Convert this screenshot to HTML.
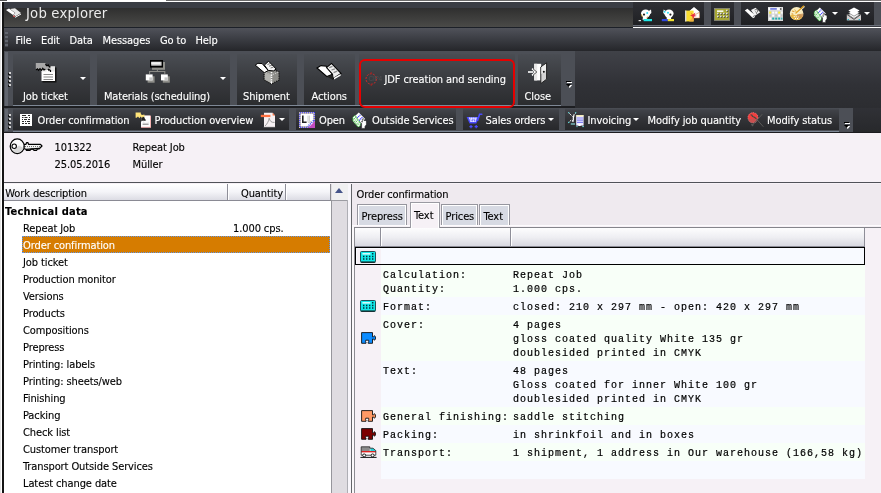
<!DOCTYPE html>
<html lang="en">
<head>
<meta charset="utf-8">
<title>Job explorer</title>
<style>
html,body{margin:0;padding:0;}
body{width:881px;height:493px;overflow:hidden;position:relative;background:#f6f1f6;
 font-family:"DejaVu Sans Condensed","DejaVu Sans","Liberation Sans",sans-serif;font-stretch:condensed;font-size:11px;letter-spacing:-0.1px;color:#000;}
.a{position:absolute;}
.t{position:absolute;white-space:nowrap;line-height:13px;height:13px;-webkit-text-stroke:.12px;}
.w{color:#fff;}
.btn{position:absolute;top:54px;height:50.6px;background:linear-gradient(#4a4d53,#3a3c40 45%,#2b2c2f);}
.g2{position:absolute;top:107.7px;height:22.8px;background:linear-gradient(#4c4f56 0,#404248 10%,#333438 48%,#27282b);}
.grip{position:absolute;width:3px;}
.grip i{display:block;width:2px;height:2px;background:#d4d4d4;margin:0 0 2px 0;box-shadow:-1px 1px 0 #151515;}
.arr{position:absolute;width:0;height:0;border-left:3px solid transparent;border-right:3px solid transparent;border-top:3px solid #fff;}
.row{position:absolute;left:23px;white-space:nowrap;line-height:13px;height:13px;-webkit-text-stroke:.12px;}
.mono{font-family:"Liberation Mono","DejaVu Sans Mono",monospace;font-size:10px;letter-spacing:1px;-webkit-text-stroke:.2px #000;line-height:14px;white-space:pre;color:#000;}
.tr{position:absolute;left:381px;width:484px;}
.tr .k{position:absolute;left:2px;top:4px;}
.tr .v{position:absolute;left:132px;top:4px;}
.tab{position:absolute;box-sizing:border-box;border:1px solid #96969e;border-bottom:none;background:#d7dae3;box-shadow:inset 1px 1px 0 #fff,inset -1px 0 0 #fff;}
</style>
</head>
<body>
<div id="app" style="position:absolute;left:0;top:0;width:881px;height:493px;will-change:transform">

<svg width="0" height="0" style="position:absolute"><defs>
 <g id="calc">
  <rect x="0.5" y="0.5" width="15" height="11" rx="1" fill="#10e8e8" stroke="#205058" stroke-width="1"/>
  <path d="M1 11 H15" stroke="#111" stroke-width="1"/>
  <rect x="2.4" y="2.2" width="8" height="1.3" fill="#fff"/>
  <path d="M12 2.8 h1.4 M3 5.4 h1.4 M6 5.4 h1.4 M9 5.4 h1.4 M12 5.4 h1.4 M3 8 h1.4 M6 8 h1.4 M9 8 h1.4 M12 8 h1.4" stroke="#003038" stroke-width="1.5"/>
 </g>
 <path id="pz" d="M0.6 0.6 H11.5 V4.9 H12.6 L13.4 3.6 Q14.7 4.6 14.5 6 Q14.7 7.4 13.4 8.3 L12.6 7 H11.5 V11.3 H7.2 V10 Q8.4 9.4 7.6 8.2 H4.8 Q3.8 9.4 5 10 V11.3 H0.6 Z" stroke="#111" stroke-width=".9"/>
</defs></svg>
<!-- top strip -->
<div class="a" style="left:0;top:0;width:881px;height:2px;background:#fff"></div>
<div class="a" style="left:166px;top:0;width:715px;height:1px;background:#6a6a6a"></div>
<div class="a" style="left:0;top:0;width:7px;height:1px;background:#555"></div>
<!-- left frame -->
<div class="a" style="left:0;top:2px;width:2px;height:491px;background:linear-gradient(90deg,#e2e2e2,#e8e8e8 1.5px,#fff 1.5px)"></div>
<div class="a" style="left:2px;top:2px;width:1.6px;height:491px;background:#141414"></div>

<!-- title bar -->
<div class="a" id="title" style="left:4px;top:2px;width:877px;height:26px;background:linear-gradient(#3a3d44 0,#3a3d44 6px,#2f2f2f 6px,#4a4a48 25px,#1c2028 25px,#1c2028 26px)"></div>
<svg class="a" style="left:5px;top:8px" width="17" height="11" viewBox="0 0 17 11">
 <path d="M1 2 L4 0.5 L10 5 L8 7 Z" fill="#fff"/>
 <path d="M5 1 L10 0.3 L16 5 L10.5 8.2 L8.5 6.8 L10.3 5 Z" fill="#e8e8e8"/>
 <path d="M8 7.5 L10.5 9.2 L16 6" stroke="#fff" stroke-width="1" fill="none"/>
 <rect x="8.2" y="7.6" width="1.6" height="1.4" fill="#c03030"/>
</svg>
<div class="t w" style="left:26px;top:4px;font-size:14.7px;letter-spacing:.2px;line-height:18px;height:18px;color:#ececec;-webkit-text-stroke:0">Job explorer</div>

<!-- title toolbar -->
<div class="a" style="left:633px;top:2px;width:248px;height:23px;background:#4c4f56"></div>
<div class="a" style="left:633px;top:2px;width:241px;height:23px;background:linear-gradient(#2f3035,#1f2023)"></div>
<div class="a" style="left:704px;top:2px;width:7px;height:23px;background:#4c4f56"></div>
<div class="a" style="left:734px;top:2px;width:7px;height:23px;background:#4c4f56"></div>
<div class="a" style="left:633px;top:25px;width:248px;height:3px;background:linear-gradient(#6a6f7a 0,#6a6f7a 1px,#3a3c42 1px,#3a3c42 2px,#fff 2px)"></div>
<!-- title toolbar icons -->
<svg class="a" style="left:638px;top:8px" width="16" height="15" viewBox="0 0 16 15">
 <ellipse cx="7.6" cy="5.6" rx="4.6" ry="4.2" fill="#fff"/>
 <path d="M10 3.4 L13 1.6 L13.4 5 L11 7Z" fill="#fff"/>
 <path d="M5 8 L9.6 8.4 L9 11 L4.6 12Z" fill="#fff"/>
 <circle cx="9.2" cy="5" r="1" fill="#30d8f0"/>
 <circle cx="6" cy="6.6" r="1.1" fill="#222"/>
 <path d="M3.4 6.4 L4.4 9 M9.6 8.6 L8.8 10.4" stroke="#c8a030" stroke-width=".9"/>
 <rect x="5.6" y="11" width="8.4" height="2.2" fill="#20e8e8"/>
 <rect x="0.6" y="12" width="2.4" height="1.2" fill="#ddd"/>
</svg>
<svg class="a" style="left:661px;top:8px" width="15" height="15" viewBox="0 0 15 15">
 <ellipse cx="8" cy="5.6" rx="4.6" ry="4.2" fill="#fff"/>
 <path d="M5.6 3.4 L2.6 1.6 L2.2 5 L4.6 7Z" fill="#fff"/>
 <path d="M5.6 8 L10.4 8.4 L10 11 L5.8 11.4Z" fill="#fff"/>
 <circle cx="3.6" cy="3.8" r="1" fill="#30d8f0"/>
 <circle cx="7" cy="4.8" r="1" fill="#30d8f0"/>
 <circle cx="9.4" cy="6.6" r="1.1" fill="#222"/>
 <rect x="0.8" y="11" width="6" height="2.2" fill="#3048e0"/>
 <rect x="6.8" y="11" width="6.2" height="2.2" fill="#f0e030"/>
</svg>
<svg class="a" style="left:684px;top:6px" width="17" height="17" viewBox="0 0 17 17">
 <path d="M5.4 5 L10 1 L15.4 5.4 L15.4 12 L6 12Z" fill="#e8e8e8"/>
 <path d="M6 4.6 L10 1.6 L14.8 5.4 L10.4 8.6Z" fill="#fff"/>
 <path d="M10 9.4 L15.4 6.4 L15.4 12 L9 12Z" fill="#fff" stroke="#e08040" stroke-width=".5"/>
 <rect x="1" y="4.6" width="8.6" height="10.8" fill="#f8dc30"/>
 <rect x="1" y="4.6" width="1.4" height="10.8" fill="#d8d8d8"/>
 <path d="M5 15.4 L9.6 10 V15.4Z" fill="#f0b040"/>
 <path d="M6.6 6.4 L8.8 8.4 L11.4 6.6 L10.6 9.2 L13 10 L10.2 10.6 L9 13.2 L8.4 10.6 L6 9.6 L8 8.8Z" fill="#e83040"/>
</svg>
<svg class="a" style="left:713.5px;top:7.5px" width="16" height="13" viewBox="0 0 16 13">
 <rect x="0.4" y="0.4" width="15.2" height="12" fill="#a8a834" stroke="#8a8a80" stroke-width=".8"/>
 <rect x="3" y="2.4" width="6.4" height="1.5" fill="#fff"/>
 <path d="M3.2 5 h1.4 M6.2 5 h1.4 M9.2 5 h1.4 M12.2 5 h1.4 M12.2 2 h1.4 M3.2 8 h1.4 M6.2 8 h1.4 M9.2 8 h1.4 M12.2 8 h1.4" stroke="#1a1a1a" stroke-width="1.6" transform="translate(.6 .9)"/>
 <path d="M3.2 5 h1.4 M6.2 5 h1.4 M9.2 5 h1.4 M12.2 5 h1.4 M12.2 2 h1.4 M3.2 8 h1.4 M6.2 8 h1.4 M9.2 8 h1.4 M12.2 8 h1.4" stroke="#fff" stroke-width="1.5" transform="translate(0 .4)"/>
</svg>
<svg class="a" style="left:744px;top:7px" width="17" height="13" viewBox="0 0 17 13">
 <path d="M0.8 3.4 L3.4 1.8 L10.6 7.8 L8.2 10.6 Z" fill="#fff"/>
 <path d="M2 4.6 L8.4 11.4" stroke="#222" stroke-width=".6" stroke-dasharray="1 .8"/>
 <path d="M7 3 L11.6 0.8 L16.2 5.2 L10.6 9 L9.6 7 Z" fill="#f2f2f2"/>
 <path d="M10.6 3 L12.4 2.4 L14 4.2 L12.4 5.4 L11.2 4.6 M12 6.6 L13.2 6" stroke="#4a4a4a" stroke-width=".7" fill="none"/>
 <path d="M8.6 10.8 L10.8 9.4" stroke="#fff" stroke-width="1.2"/>
</svg>
<svg class="a" style="left:768px;top:7px" width="15" height="14" viewBox="0 0 15 14">
 <rect x="0" y="0" width="15" height="14" fill="#d6d6d6"/>
 <rect x="0.4" y="0.6" width="14.2" height="2.6" fill="#fff"/>
 <rect x="2.2" y="1.4" width="6.6" height="1.1" fill="#2838d0"/>
 <path d="M13.4 0.8 L11.6 2 L13.4 3.2Z" fill="#111"/>
 <rect x="1.2" y="4.6" width="2" height="2" fill="#f8f030"/><rect x="4.2" y="4.6" width="2" height="2" fill="#fff"/><rect x="7.2" y="4.6" width="2" height="2" fill="#fff"/><rect x="10.2" y="4.6" width="2" height="2" fill="#f8f030"/><rect x="13.2" y="4.6" width="1.4" height="2" fill="#fff"/>
 <rect x="1.2" y="7.6" width="2" height="2" fill="#c0c0c0"/><rect x="4.2" y="7.6" width="2" height="2" fill="#fff"/><rect x="7.2" y="7.6" width="2" height="2" fill="#c0c0c0"/><rect x="10.2" y="7.6" width="2" height="2" fill="#fff"/><rect x="13.2" y="7.6" width="1.4" height="2" fill="#c0c0c0"/>
 <rect x="1.2" y="10.6" width="2" height="2" fill="#fff"/><rect x="4.2" y="10.6" width="2" height="2" fill="#20b0b0"/><rect x="7.2" y="10.6" width="2" height="2" fill="#20b0b0"/><rect x="10.2" y="10.6" width="2" height="2" fill="#20b0b0"/><rect x="13.2" y="10.6" width="1.2" height="2" fill="#20b0b0"/>
</svg>
<svg class="a" style="left:789px;top:5px" width="17" height="16" viewBox="0 0 17 16">
 <ellipse cx="7.6" cy="8.6" rx="6.8" ry="6.6" fill="#f8ecc0"/>
 <path d="M1.2 10 A6.8 6.6 0 0 0 13.8 11.4 L11 9 L6.8 10.4 L4 9.6Z" fill="#e8b848"/>
 <path d="M8 9.6 L14 8.4 L14.4 11 L11 13.6 L7.6 12.4Z" fill="#c89058" opacity=".8"/>
 <path d="M4.8 11.6 L9.8 12 M6 13.4 L9.4 13.6" stroke="#fff" stroke-width="1" stroke-dasharray="1 1"/>
 <path d="M3 6 L5.4 6.6 M2.6 8.8 L4.2 9" stroke="#e09020" stroke-width=".9"/>
 <path d="M6.6 8.6 L15 0.8" stroke="#e0a020" stroke-width="1.4"/>
 <path d="M7 9.6 L15.8 1.6" stroke="#f8f0d0" stroke-width="1"/>
 <path d="M5.6 4.4 L7.6 7.6" stroke="#e0a020" stroke-width=".7"/>
</svg>
<svg class="a" style="left:813px;top:6.5px" width="15" height="16" viewBox="0 0 15 17">
 <path d="M6.8 0.6 L13.2 7 L8 12 L2 5Z" fill="#fff"/>
 <path d="M5 6.2 L8.4 2.8 M7 8.6 L10.6 5" stroke="#3838ff" stroke-width="1.2" stroke-dasharray="1.2 .6"/>
 <path d="M0.8 5.2 L3 3.2 L8.4 11 L8.2 14 L6 15 L0.8 9Z" fill="#f4fff4"/>
 <path d="M0.8 5.2 L3 3.2 L8.4 11 L8.2 14 L6 15 L0.8 9Z" fill="none" stroke="#1aa01a" stroke-width="1" stroke-dasharray="1 1"/>
 <path d="M2 6 L7 13 M1.2 7.4 L6 14 M3.4 5 L8 11.6" stroke="#1aa01a" stroke-width=".9" stroke-dasharray="1 1"/>
 <path d="M9.6 16.4 V11.6 L8.6 10.2 L9.6 9.4 L10.4 10.2 V7 Q11.2 6 12 7 V8.6 Q13.6 8 14.4 9.4 V12.6 L13 14.4 V16.4Z" fill="#fff" stroke="#222" stroke-width=".6"/>
</svg>
<div class="arr" style="left:831.5px;top:12px"></div>
<svg class="a" style="left:845.5px;top:6.5px" width="16" height="15" viewBox="0 0 16 15">
 <path d="M0.8 7.4 H15 V13.4 H0.8Z" fill="#d4d0d0"/>
 <path d="M0.8 7.4 L8 12.4 L15 7.4" stroke="#333" stroke-width=".8" fill="none"/>
 <path d="M8 4.6 L13.6 7.8 L8 11.4 L2.4 7.8Z" fill="#fff" stroke="#333" stroke-width=".5"/>
 <path d="M8 2.6 L13.6 5.8 L8 9.2 L2.4 5.8Z" fill="#fff" stroke="#333" stroke-width=".5"/>
 <path d="M8 0.4 L13.6 3.6 L8 7 L2.4 3.6Z" fill="#fff"/>
 <rect x="1.6" y="12" width="1.4" height="1.2" fill="#20b8c8"/><rect x="12.6" y="12" width="1.4" height="1.2" fill="#20b8c8"/>
</svg>
<div class="arr" style="left:863.5px;top:12px"></div>


<!-- menu bar -->
<div class="a" style="left:4px;top:28px;width:877px;height:23px;background:linear-gradient(#50525a,#3a3c42 50%,#25262a)"></div>
<div class="a" style="left:5.2px;top:31.5px;width:2.8px;height:15px;background:repeating-linear-gradient(#62666f 0,#62666f 2px,#44464c 2px,#44464c 4px)"></div>
<div class="t w" style="left:15.5px;top:34px">File</div>
<div class="t w" style="left:41px;top:34px">Edit</div>
<div class="t w" style="left:69.5px;top:34px">Data</div>
<div class="t w" style="left:102.5px;top:34px">Messages</div>
<div class="t w" style="left:160px;top:34px">Go to</div>
<div class="t w" style="left:195.5px;top:34px">Help</div>

<!-- toolbar 1 -->
<div class="a" style="left:3.5px;top:51px;width:571.5px;height:56px;background:#4c4f56"></div>
<div class="a" style="left:575px;top:51px;width:306px;height:56.6px;background:linear-gradient(#404248,#303136 60%,#2c2d31)"></div>
<div class="a" style="left:5.2px;top:52px;width:2.8px;height:53.5px;background:#62666f"></div>
<div class="grip" style="left:9px;top:72px"><i></i><i></i><i></i><i></i></div>
<div class="btn" style="left:12.6px;width:77.4px"></div>
<div class="btn" style="left:96.5px;width:133.8px"></div>
<div class="btn" style="left:237px;width:60.3px"></div>
<div class="btn" style="left:303.5px;width:51.3px"></div>
<div class="btn" style="left:358.5px;width:156.5px"></div>
<div class="btn" style="left:517.5px;width:43.5px"></div>
<div class="a" style="left:12.6px;top:104.6px;width:548.4px;height:1.6px;background:#7e8896"></div>
<div class="a" style="left:3.5px;top:106.3px;width:571.5px;height:1.4px;background:#1d1e21"></div>
<div class="t w" style="left:23px;top:90px">Job ticket</div>
<div class="t w" style="left:104px;top:90px;letter-spacing:-.18px">Materials (scheduling)</div>
<div class="t w" style="left:243px;top:90px">Shipment</div>
<div class="t w" style="left:311.5px;top:90px">Actions</div>
<div class="t w" style="left:384.5px;top:73px">JDF creation and sending</div>
<div class="t w" style="left:524.5px;top:90px">Close</div>
<div class="arr" style="left:79.5px;top:77px"></div>
<div class="arr" style="left:219.5px;top:77px"></div>
<div class="a" style="left:358.5px;top:58.5px;width:156.5px;height:49px;box-sizing:border-box;border:2.2px solid #e60000;border-radius:6px"></div>
<!-- overflow chevron tb1 -->
<svg class="a" style="left:565px;top:80px" width="9" height="9" viewBox="0 0 9 9"><rect x="2" y="2" width="5" height="1" fill="#fff"/><path d="M2.2 5 H7.2 L4.7 8 Z" fill="#fff"/><rect x="1" y="1" width="5" height="1" fill="#000"/><path d="M1 4 H6 L3.5 7 Z" fill="#000"/></svg>
<!-- Job ticket icon -->
<svg class="a" style="left:35px;top:62px" width="22" height="21" viewBox="0 0 22 21">
 <rect x="7.5" y="5.5" width="14" height="15" fill="#111"/>
 <rect x="6.5" y="4.5" width="13.5" height="14.5" fill="#fff"/>
 <rect x="6.5" y="4.5" width="13.5" height="5" fill="#e4e4e4"/>
 <path d="M8.5 12.5H18M8.5 15H18M8.5 17.5H18" stroke="#8a8a8a" stroke-width="1.1"/>
 <path d="M0.8 1 L10.5 1 L10.5 3.5 L12 5 L13.5 4 L14.5 5.5 L15.5 5 L15.5 8.5 L13.5 7.5 L12.5 8.8 L11 7.5 L9 8.5 L7.8 6.8 L6.5 8.5 L5 7 L3.5 8.5 L2.5 7 L0.8 8 Z" fill="#a8a8a8"/>
 <path d="M0.8 8 L2.5 6.8 L3.5 8.3 L5 6.6 L6.5 8.3 L7.8 6.3 L9 8 L10.3 7 M10.5 2 L12 4 L13.2 3 L14.4 5 L15.5 4.6 M12.8 8.6 L13.6 7.4 L15.5 8.6 L15.5 10" stroke="#000" stroke-width="1.2" fill="none"/>
 <rect x="11.5" y="8" width="1.6" height="2.5" fill="#fff"/>
</svg>
<!-- Materials icon -->
<svg class="a" style="left:145px;top:59px" width="25" height="25" viewBox="0 0 25 25">
 <rect x="7" y="3" width="13" height="7.8" fill="#8f8f8a"/>
 <rect x="5" y="1" width="13" height="7.6" fill="#000"/>
 <rect x="6.2" y="2.7" width="10.4" height="4" fill="#cfcfcf"/>
 <rect x="6.2" y="3.2" width="9" height="2" fill="#fff" opacity=".7"/>
 <path d="M12.4 9 V12.5 M4.6 15 V12.5 H19.8 V15" stroke="#8a8a86" stroke-width="1.1" fill="none"/>
 <rect x="2.6" y="17.3" width="7" height="6.4" fill="#8f8f8a"/>
 <rect x="0.8" y="15.4" width="6.8" height="6" fill="#fff"/>
 <rect x="4.3" y="18.4" width="3.3" height="3" fill="#c4c4c4"/>
 <rect x="17.8" y="17.3" width="7" height="6.4" fill="#8f8f8a"/>
 <rect x="16" y="15.4" width="6.8" height="6" fill="#fff"/>
 <rect x="19.5" y="18.4" width="3.3" height="3" fill="#c4c4c4"/>
</svg>
<!-- Shipment icon -->
<svg class="a" style="left:254px;top:60px" width="27" height="25" viewBox="0 0 27 25">
 <path d="M10 11.5 L17.5 8.5 L25 12 L25 20 L17.5 24 L10 20 Z" fill="#8c8c88" stroke="#111" stroke-width="1.2" stroke-dasharray="1.2 1"/>
 <path d="M10 11.5 L17.5 15 L25 12 M17.5 15 V24" stroke="#d8d8d8" stroke-width="1" fill="none" stroke-dasharray="1 1"/>
 <path d="M11 12.5 L17 15.3 L17 23 L11 19.6Z" fill="#b4b4b0"/>
 <path d="M17.5 12 V23" stroke="#fff" stroke-width="1.6" stroke-dasharray="1.3 1.1"/>
 <path d="M1.2 5.1 L3.9 3.3 L8.2 3.6 L14.2 10.6 L10.3 12.7 Z" fill="#fff" stroke="#000" stroke-width="1"/>
 <path d="M10.4 5.1 L14.6 1.2 L22.2 9.1 L19.4 10.9 L14.2 10.4 Z" fill="#f4f4f4" stroke="#000" stroke-width="1"/>
 <path d="M13.5 4.5 L16 3.6 M15 6.2 L18 5.2 M16.6 8 L19.6 7" stroke="#7a7a7a" stroke-width="1"/>
</svg>
<!-- Actions icon -->
<svg class="a" style="left:316px;top:62px" width="27" height="19" viewBox="0 0 27 19">
 <path d="M1 6 L5 3.6 L10.5 4.2 L16.5 12.2 L11 14.6 Z" fill="#fff" stroke="#000" stroke-width="1.1"/>
 <path d="M10.5 5.6 L15.5 1.4 L25 11.4 L17 16.8 L16.5 12.2 Z" fill="#f0f0f0" stroke="#000" stroke-width="1.1"/>
 <path d="M13.2 5.6 L16.5 4.4 M15.5 8 L19 6.8 M17.6 10.6 L21.2 9.2" stroke="#8a8a8a" stroke-width="1.3"/>
 <path d="M11 14.8 L16.6 12.6 L17.2 16.6 L16.2 17.6 Z" fill="#222"/>
 <path d="M18 15.8 L24.6 12 L24.6 13.8 L18 17.6 Z" fill="#fff"/>
</svg>
<!-- JDF icon -->
<svg class="a" style="left:364px;top:70px" width="20" height="18" viewBox="0 0 20 18">
 <circle cx="7.2" cy="9" r="5.2" fill="none" stroke="#d82828" stroke-width=".9" stroke-dasharray="2 1.2"/>
 <path d="M7.2 2 V4 M7.2 14 V16" stroke="#a02020" stroke-width="1"/>
 <text x="4.6" y="11.4" font-family="'Liberation Sans',sans-serif" font-size="6.5" fill="#505052" letter-spacing="-0.3">CIP4</text>
</svg>
<!-- Close icon -->
<svg class="a" style="left:527px;top:62px" width="22" height="23" viewBox="0 0 22 23">
 <rect x="7.2" y="1.8" width="7" height="16.6" fill="#fff"/>
 <rect x="7.2" y="1.8" width="3" height="16.6" fill="#e8e8e8"/>
 <path d="M13.8 5 L19.6 0.8 L19.6 17.2 L13.8 21.6 Z" fill="#d4d4d4" stroke="#222" stroke-width="1"/>
 <path d="M14.4 5.3 L19 2 L19 8 L14.4 12 Z" fill="#efefef"/>
 <circle cx="16.8" cy="9.8" r="1" fill="#111"/>
 <path d="M1 10 H6.4" stroke="#fff" stroke-width="1.6"/>
 <path d="M5 6.6 L8.8 10 L5 13.4" stroke="#fff" stroke-width="1.5" fill="none"/>
 <path d="M6.2 7 L9.8 10 L6.2 13" stroke="#222" stroke-width=".8" fill="none"/>
</svg>


<!-- toolbar 2 -->
<div class="a" style="left:3.5px;top:107.7px;width:849.5px;height:24.6px;background:#4c4f56"></div>
<div class="a" style="left:853px;top:107.5px;width:28px;height:25px;background:linear-gradient(#303136,#27282b)"></div>
<div class="a" style="left:5.2px;top:108.5px;width:2.8px;height:22.5px;background:#62666f"></div>
<div class="g2" style="left:12.7px;width:276.3px"></div>
<div class="g2" style="left:296px;width:160px"></div>
<div class="g2" style="left:463px;width:95.5px"></div>
<div class="g2" style="left:565px;width:274px"></div>
<div class="a" style="left:12.7px;top:130.5px;width:826.8px;height:1.5px;background:#7e8896"></div>
<div class="a" style="left:3.5px;top:132px;width:877.5px;height:1.4px;background:#1c1c1f"></div>
<div class="grip" style="left:9px;top:114px"><i></i><i></i><i></i><i></i></div>
<div class="t w" style="left:37.5px;top:114px">Order confirmation</div>
<div class="t w" style="left:154.5px;top:114px">Production overview</div>
<div class="t w" style="left:319px;top:114px">Open</div>
<div class="t w" style="left:372px;top:114px">Outside Services</div>
<div class="t w" style="left:485.5px;top:114px">Sales orders</div>
<div class="t w" style="left:587.5px;top:114px">Invoicing</div>
<div class="t w" style="left:647.5px;top:114px">Modify job quantity</div>
<div class="t w" style="left:767px;top:114px">Modify status</div>
<div class="arr" style="left:278.5px;top:118.2px;border-width:3.5px 3.5px 0 3.5px"></div>
<div class="arr" style="left:547.5px;top:118.2px;border-width:3.5px 3.5px 0 3.5px"></div>
<div class="arr" style="left:633px;top:118.2px;border-width:3.5px 3.5px 0 3.5px"></div>
<svg class="a" style="left:843.4px;top:121px" width="9" height="9" viewBox="0 0 9 9"><rect x="2" y="2" width="5" height="1" fill="#fff"/><path d="M2.2 5 H7.2 L4.7 8 Z" fill="#fff"/><rect x="1" y="1" width="5" height="1" fill="#000"/><path d="M1 4 H6 L3.5 7 Z" fill="#000"/></svg>
<!-- Order confirmation icon -->
<svg class="a" style="left:20px;top:114px" width="12" height="12" viewBox="0 0 12 12" shape-rendering="crispEdges">
 <rect x="0" y="0" width="12" height="12" fill="#fff"/>
 <path d="M2 1.5H6M8 1.5H10 M2 3.5H3.5M4.5 3.5H7.5M9 3.5H10 M2 5.5H3M4 5.5H7M8 5.5H10 M2 7.5H4M5 7.5H6M7 7.5H10 M2 9.5H4M5 9.5H7M8 9.5H10" stroke="#2a2a2a" stroke-width="1" shape-rendering="auto"/>
</svg>
<!-- Production overview icon -->
<svg class="a" style="left:134.5px;top:111.5px" width="17" height="17" viewBox="0 0 17 17">
 <rect x="6" y="3.6" width="10" height="12.2" fill="#f6b4b4"/>
 <rect x="6" y="3.6" width="9" height="11.2" fill="#fff"/>
 <path d="M6.2 4 L9 4.4 L10 7 L11.2 8.2 L9.4 9 L8 8.4 L6.2 9.4Z" fill="#222"/>
 <path d="M8.2 10.2 L9.2 8.6 L10.2 10.2Z" fill="#fff"/>
 <path d="M7.6 12.2H13.6" stroke="#8a8a8a" stroke-width="1.2"/>
 <path d="M7.6 10.6 L8.6 9.2 L9.8 10.6 L12.6 10.6 L13.6 9.4 L13.6 10.8Z" fill="#ddd"/>
 <path d="M0.6 0.6 L5.8 0.6 L5.8 2 L7 3 L9.4 2.6 L9.4 5.4 L8 4.6 L7 6 L5.6 4.4 L4.4 6.2 L3 4.6 L1.6 5.8 L0.6 5.8Z" fill="#ffe47a"/>
</svg>
<!-- PDF icon -->
<svg class="a" style="left:260px;top:112px" width="16" height="16" viewBox="0 0 16 16">
 <path d="M4 0.8 H12.6 L15 3.4 V15 H4 Z" fill="#f6f0f2"/>
 <path d="M12.6 0.8 L15 3.4 H12.6Z" fill="#ff7040"/>
 <path d="M5 14 C7.6 11.6 8.6 9 9.2 6.2 C9.8 9 11.4 10.8 14.6 10.4" stroke="#9c9c9c" stroke-width="1" fill="none"/>
 <rect x="0.8" y="2.8" width="9.6" height="2.3" fill="#ff7040"/>
 <path d="M3.6 15.2 H15.2" stroke="#888" stroke-width=".6"/>
</svg>
<!-- Open icon -->
<svg class="a" style="left:299px;top:112px" width="16" height="16" viewBox="0 0 16 16">
 <rect x="0" y="0" width="16" height="16" fill="#e8dca8"/>
 <rect x="0.75" y="0.75" width="14.5" height="14.5" fill="none" stroke="#2828ff" stroke-width="1.5" stroke-dasharray="1 1"/>
 <rect x="2" y="2" width="12" height="12" fill="#fff"/>
 <path d="M16 9 L16 16 L9 16 Z" fill="#c24cc2"/>
 <path d="M14.6 8.6 L8.6 14.6" stroke="#2828ff" stroke-width="1.4" stroke-dasharray="1 1"/>
 <path d="M3.8 3.4 V10.2 H7.6" stroke="#222" stroke-width="1.6" fill="none"/>
 <path d="M9 3.6 V7 M10.4 3.6 V9.4 H12.8 M9 7 V10.4 H12" stroke="#c8c8c8" stroke-width=".9" fill="none"/>
</svg>
<!-- Outside services icon -->
<svg class="a" style="left:352px;top:112px" width="15" height="17" viewBox="0 0 15 17">
 <path d="M6.8 0.6 L13.2 7 L8 12 L2 5Z" fill="#fff"/>
 <path d="M5 6.2 L8.4 2.8 M7 8.6 L10.6 5" stroke="#3838ff" stroke-width="1.2" stroke-dasharray="1.2 .6"/>
 <path d="M0.8 5.2 L3 3.2 L8.4 11 L8.2 14 L6 15 L0.8 9Z" fill="#f4fff4"/>
 <path d="M0.8 5.2 L3 3.2 L8.4 11 L8.2 14 L6 15 L0.8 9Z" fill="none" stroke="#1aa01a" stroke-width="1" stroke-dasharray="1 1"/>
 <path d="M2 6 L7 13 M1.2 7.4 L6 14 M3.4 5 L8 11.6" stroke="#1aa01a" stroke-width=".9" stroke-dasharray="1 1"/>
 <path d="M9.6 16.4 V11.6 L8.6 10.2 L9.6 9.4 L10.4 10.2 V7 Q11.2 6 12 7 V8.6 Q13.6 8 14.4 9.4 V12.6 L13 14.4 V16.4Z" fill="#fff" stroke="#222" stroke-width=".6"/>
</svg>
<!-- Cart icon -->
<svg class="a" style="left:465.5px;top:112.5px" width="17" height="16" viewBox="0 0 17 16">
 <path d="M15.8 1.2 H13.6 L11.6 7.4" stroke="#4a4aff" stroke-width="1.6" fill="none" stroke-linecap="round"/>
 <path d="M0.6 4 H12.4 L10.4 10.4 H3.6 Z" fill="#4a4aff"/>
 <path d="M2.6 4.4 H11 L9.6 9 H4.4Z" fill="#fff"/>
 <path d="M4.4 4.4 V6 M6.4 4.4 V9 M8.4 4.4 V9 M10 4.4 V6 M3 6.2 H10.4 M3.8 7.8 H10" stroke="#4a4aff" stroke-width=".8" stroke-dasharray=".8 .6"/>
 <path d="M3.4 13.6 H6.6 M5 12 V15.2 M8.6 13.6 H11.8 M10.2 12 V15.2" stroke="#4a4aff" stroke-width="1.2"/>
</svg>
<!-- Invoicing icon -->
<svg class="a" style="left:567.5px;top:111.5px" width="17" height="16" viewBox="0 0 17 16">
 <path d="M0.6 0.6 L4.6 4.6 M8 0.6 L5.6 3 M0.6 10.6 L3.6 7.6" stroke="#fff" stroke-width="1" stroke-dasharray="1.4 .8"/>
 <path d="M0.4 0.4 L1.2 1.2 M8.2 0.4 L7.4 1.2 M0.4 10.8 L1.2 10" stroke="#50e0e0" stroke-width="1.1"/>
 <path d="M6 3 Q5 6 5.4 8 L4 9.4" stroke="#fff" stroke-width="1.2" fill="none"/>
 <path d="M4.6 9.6 H6.6" stroke="#fff" stroke-width="1" stroke-dasharray="1 1"/>
 <path d="M2.8 12 H7" stroke="#88d8d8" stroke-width="1.2"/>
 <rect x="8.2" y="3.2" width="7.4" height="10.4" fill="#eceaff"/>
 <rect x="8.2" y="3.2" width="7.4" height="1.2" fill="#fff4b0"/>
 <path d="M10 5.4 V11.4 M12 5.4 V11.4 M14 5.4 V11.4" stroke="#2a2ae0" stroke-width="1.1" stroke-dasharray="1.1 1.1"/>
 <rect x="10.4" y="11.6" width="2.2" height="2.4" fill="#fff"/>
 <path d="M8.4 14.6 H9.6 M14.2 14.6 H16" stroke="#70d0d0" stroke-width="1"/>
</svg>
<!-- Modify status icon -->
<svg class="a" style="left:747px;top:112px" width="18" height="17" viewBox="0 0 18 17">
 <circle cx="6" cy="5.8" r="5.2" fill="#c85050"/>
 <path d="M0.8 5.8 A5.2 5.2 0 0 1 11.2 5.8 L 10.8 6.8 L 6.6 6.4 L 2 7.2 Z" fill="#f04040"/>
 <circle cx="6" cy="5.8" r="5.2" fill="none" stroke="#d8b0b8" stroke-width=".5" stroke-dasharray="1 1.4"/>
 <path d="M3.6 2.8 L5 3.2 L5.4 4.4 L7.4 5.2 L9.4 6.8" stroke="#3a4a40" stroke-width="1.1" fill="none"/>
 <path d="M15.2 2.2 L5.2 13.6 M9.8 7.4 L16.4 14.8" stroke="#5a5a58" stroke-width="1"/>
 <path d="M4.6 12 L6 14" stroke="#5a5a58" stroke-width="1.4"/>
</svg>


<!-- info panel -->
<div class="a" style="left:3.6px;top:133.4px;width:877.4px;height:48.6px;background:#f6f1f6"></div>
<div class="t" style="left:54.6px;top:141px">101322</div>
<div class="t" style="left:54.6px;top:158px">25.05.2016</div>
<div class="t" style="left:132.6px;top:141px">Repeat Job</div>
<div class="t" style="left:132.6px;top:158px">Müller</div>
<svg class="a" style="left:9px;top:138px" width="35" height="17" viewBox="0 0 35 17">
 <path d="M14.6 6.3 L17 6.3 L17.5 4.7 L19 4.7 L19.5 6.3 L31.5 6.3 L33 8 L30 11 L28.5 11 L27.5 12.4 L25 12.4 L24 11.2 L22 11.2 L21 12.4 L17.5 12.4 L16.5 11 L14.6 10.6Z" fill="#f4f4f4" stroke="#000" stroke-width="1.2" stroke-linejoin="round"/>
 <path d="M17 11.4 L30 10.4" stroke="#000" stroke-width="1.4"/>
 <ellipse cx="8.25" cy="8.25" rx="7" ry="7.3" fill="#fafafa" stroke="#000" stroke-width="1.3"/>
 <path d="M3.5 12.5 A7 7.3 0 0 0 14.6 10 L10 7.5 Z" fill="#c8c8c8" opacity=".7"/>
 <circle cx="5.2" cy="8.25" r="2.2" fill="#fff" stroke="#000" stroke-width="1.1"/>
 <path d="M14 8.6 L31 8.6" stroke="#555" stroke-width=".9" stroke-dasharray="1 1"/>
</svg>

<!-- divider line -->
<div class="a" style="left:4px;top:182px;width:877px;height:1.3px;background:#505258"></div>

<!-- left list -->
<div class="a" style="left:4px;top:184px;width:327px;height:17px;background:linear-gradient(#fff,#f4f4f8 50%,#dcdce4);border-bottom:1px solid #8a8a94;box-sizing:border-box"></div>
<div class="a" style="left:227px;top:184px;width:1px;height:16px;background:#8e8e98"></div>
<div class="a" style="left:285px;top:184px;width:1px;height:16px;background:#8e8e98"></div>
<div class="a" style="left:228px;top:184px;width:1px;height:16px;background:#fff"></div>
<div class="a" style="left:286px;top:184px;width:1px;height:16px;background:#fff"></div>
<div class="t" style="left:5.3px;top:186.6px">Work description</div>
<div class="t" style="left:241px;top:186.6px">Quantity</div>
<div class="a" style="left:4px;top:201px;width:327px;height:292px;background:#fff"></div>
<div class="a" style="left:22px;top:236px;width:308.4px;height:17px;background:#d67c00;box-sizing:border-box;border:1px dotted #5a96f0"></div>
<div class="row" style="left:5px;top:204.5px;font-weight:bold;letter-spacing:.2px">Technical data</div>
<div class="row" style="top:222px">Repeat Job</div>
<div class="row" style="left:233px;top:222px">1.000 cps.</div>
<div class="row w" style="top:239px">Order confirmation</div>
<div class="row" style="top:256px">Job ticket</div>
<div class="row" style="top:273px">Production monitor</div>
<div class="row" style="top:290px">Versions</div>
<div class="row" style="top:307px">Products</div>
<div class="row" style="top:324px">Compositions</div>
<div class="row" style="top:341px">Prepress</div>
<div class="row" style="top:358px">Printing: labels</div>
<div class="row" style="top:375px">Printing: sheets/web</div>
<div class="row" style="top:392px">Finishing</div>
<div class="row" style="top:409px">Packing</div>
<div class="row" style="top:426px">Check list</div>
<div class="row" style="top:443px">Customer transport</div>
<div class="row" style="top:460px">Transport Outside Services</div>
<div class="row" style="top:477px">Latest change date</div>

<!-- scrollbar -->
<div class="a" style="left:331px;top:184px;width:17px;height:309px;background:#dfdce1"></div>
<div class="a" style="left:330.3px;top:184px;width:1px;height:17px;background:#8c8c92"></div>
<div class="a" style="left:331.3px;top:200px;width:1.2px;height:293px;background:#96969c"></div>
<div class="a" style="left:347px;top:200px;width:1px;height:293px;background:#aeaeb4"></div>
<div class="a" style="left:332.2px;top:184px;width:15.8px;height:16.2px;background:#f0f0f1"></div>
<div class="a" style="left:332.2px;top:200.2px;width:15px;height:1px;background:#9c9ca2"></div>
<div class="a" style="left:334.8px;top:188px;width:0;height:0;border-left:4.7px solid transparent;border-right:4.7px solid transparent;border-bottom:5.2px solid #46558a"></div>
<!-- splitter -->
<div class="a" style="left:348px;top:184px;width:3px;height:309px;background:#f8f6fb"></div>
<div class="a" style="left:351px;top:183.5px;width:1.2px;height:310px;background:#64666a"></div>
<div class="a" style="left:352.2px;top:226px;width:2px;height:267px;background:#fbf9fb"></div>
<div class="a" style="left:354.2px;top:226.5px;width:1.3px;height:267px;background:#8c8c92"></div>

<!-- right panel -->
<div class="a" style="left:352.2px;top:184px;width:528.8px;height:42px;background:#efeaef"></div>
<div class="t" style="left:356.5px;top:188px">Order confirmation</div>
<div class="a" style="left:352px;top:225px;width:529px;height:1px;background:#fdfbfd"></div>
<div class="a" style="left:354px;top:226.5px;width:527px;height:1.6px;background:#85858b"></div>
<div class="tab" style="left:357.3px;top:204.4px;width:50.2px;height:20.6px"></div>
<div class="tab" style="left:441.2px;top:204.4px;width:36.5px;height:20.6px"></div>
<div class="tab" style="left:479.4px;top:204.4px;width:30.4px;height:20.6px"></div>
<div class="a" style="left:409.5px;top:202.3px;width:30.5px;height:26px;background:#f6f1f6;box-sizing:border-box;border:1px solid #9a9aa2;border-bottom:none"></div>
<div class="a" style="left:410.5px;top:203.3px;width:28.5px;height:25px;box-sizing:border-box;border:1px solid #fff;border-bottom:none"></div>
<div class="t" style="left:361.5px;top:209.8px">Prepress</div>
<div class="t" style="left:414px;top:208.5px">Text</div>
<div class="t" style="left:445.5px;top:209.8px">Prices</div>
<div class="t" style="left:483.5px;top:209.8px">Text</div>

<!-- table -->
<div class="a" style="left:355px;top:228px;width:510px;height:18px;background:linear-gradient(#fdfdfe,#efeff3 50%,#d8d8e0)"></div>
<div class="a" style="left:355px;top:246px;width:510px;height:1px;background:#8a8a94"></div>
<div class="a" style="left:380px;top:228px;width:1px;height:18px;background:#8e8e98"></div>
<div class="a" style="left:381px;top:228px;width:1px;height:18px;background:#fff"></div>
<div class="a" style="left:510px;top:228px;width:1px;height:18px;background:#8e8e98"></div>
<div class="a" style="left:511px;top:228px;width:1px;height:18px;background:#fff"></div>
<div class="a" style="left:864px;top:228px;width:1px;height:18px;background:#8e8e98"></div>
<div class="a" style="left:355px;top:246.7px;width:510px;height:18.1px;box-sizing:border-box;border:1.6px solid #000;background:#f8faff"></div>
<div class="a" style="left:356.5px;top:248.5px;width:24.5px;height:15px;background:#f6f1f6"></div>
<div class="a" style="left:355px;top:265px;width:26px;height:228px;background:#f6f1f6"></div>

<div class="tr" style="top:265px;height:32px;background:#f8fff8"><span class="mono k">Calculation:
Quantity:</span><span class="mono v">Repeat Job
1.000 cps.</span></div>
<div class="tr" style="top:297px;height:18px;background:#f8faff"><span class="mono k">Format:</span><span class="mono v">closed: 210 x 297 mm - open: 420 x 297 mm</span></div>
<div class="tr" style="top:315px;height:46px;background:#f8fff8"><span class="mono k">Cover:</span><span class="mono v">4 pages
gloss coated quality White 135 gr
doublesided printed in CMYK</span></div>
<div class="tr" style="top:361px;height:46px;background:#f8faff"><span class="mono k">Text:</span><span class="mono v">48 pages
Gloss coated for inner White 100 gr
doublesided printed in CMYK</span></div>
<div class="tr" style="top:407px;height:18px;background:#f8fff8"><span class="mono k">General finishing:</span><span class="mono v">saddle stitching</span></div>
<div class="tr" style="top:425px;height:18px;background:#f8faff"><span class="mono k">Packing:</span><span class="mono v">in shrinkfoil and in boxes</span></div>
<div class="tr" style="top:443px;height:18px;background:#f8fff8"><span class="mono k">Transport:</span><span class="mono v">1 shipment, 1 address in Our warehouse (166,58 kg)</span></div>
<div class="tr" style="top:461px;height:18px;background:#f8faff"></div>
<!-- right panel row icons -->
<svg class="a" style="left:360.3px;top:250.5px" width="16" height="12" viewBox="0 0 16 12"><use href="#calc"/></svg>
<svg class="a" style="left:360px;top:300.3px" width="16" height="12" viewBox="0 0 16 12"><use href="#calc"/></svg>
<svg class="a" style="left:360.5px;top:331.5px" width="15" height="12" viewBox="0 0 15 12"><use href="#pz" fill="#0c8cff"/></svg>
<svg class="a" style="left:360.5px;top:409.8px" width="15" height="12" viewBox="0 0 15 12"><use href="#pz" fill="#ff9a66"/></svg>
<svg class="a" style="left:360.5px;top:427.6px" width="15" height="12" viewBox="0 0 15 12"><use href="#pz" fill="#7c0000"/></svg>
<svg class="a" style="left:359.5px;top:446px" width="17" height="12" viewBox="0 0 17 12">
 <rect x="1.2" y="0.8" width="8.6" height="4.2" fill="#8c8c8c"/>
 <rect x="1.2" y="5" width="14.6" height="1.6" fill="#e02020"/>
 <rect x="1.2" y="6.6" width="14.6" height="2.6" fill="#fff"/>
 <path d="M10.4 2.2 H13 L15.8 4.6 V5 H10.4Z" fill="#20d0d8"/>
 <path d="M1.2 0.8 H9.8 V2.2 H13 L15.8 4.6 V9.2 H1.2Z" fill="none" stroke="#222" stroke-width=".8"/>
 <circle cx="4.2" cy="9.4" r="1.5" fill="#fff" stroke="#111" stroke-width=".9"/>
 <circle cx="12.6" cy="9.4" r="1.5" fill="#fff" stroke="#111" stroke-width=".9"/>
 <path d="M0.4 11.4 H16.6" stroke="#111" stroke-width="1"/>
</svg>


</div>
</body>
</html>
